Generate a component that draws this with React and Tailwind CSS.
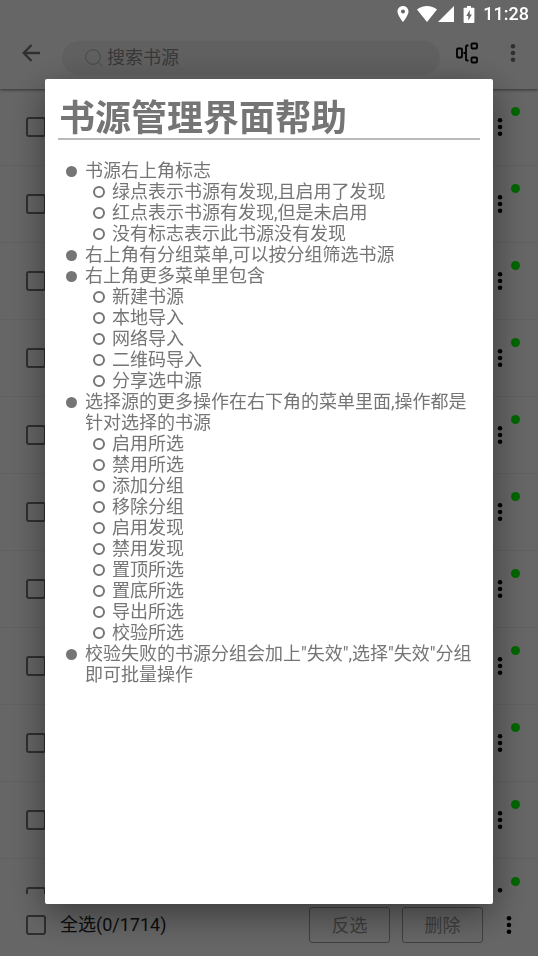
import React, { useState } from "react";

const FONT = "font-[Roboto,'Noto_Sans_CJK_SC',sans-serif]";

const SOURCE_COUNT = 11;

const helpItems = [
  {
    text: "书源右上角标志",
    children: [
      "绿点表示书源有发现,且启用了发现",
      "红点表示书源有发现,但是未启用",
      "没有标志表示此书源没有发现",
    ],
  },
  { text: "右上角有分组菜单,可以按分组筛选书源" },
  {
    text: "右上角更多菜单里包含",
    children: ["新建书源", "本地导入", "网络导入", "二维码导入", "分享选中源"],
  },
  {
    text: "选择源的更多操作在右下角的菜单里面,操作都是针对选择的书源",
    children: [
      "启用所选",
      "禁用所选",
      "添加分组",
      "移除分组",
      "启用发现",
      "禁用发现",
      "置顶所选",
      "置底所选",
      "导出所选",
      "校验所选",
    ],
  },
  { text: '校验失败的书源分组会加上"失效",选择"失效"分组即可批量操作' },
];

const MoreIcon = () => (
  <svg className="w-[6px] h-[20px]" viewBox="0 0 6 20" fill="currentColor">
    <circle cx="3" cy="3.3" r="2.3" />
    <circle cx="3" cy="10" r="2.3" />
    <circle cx="3" cy="16.7" r="2.3" />
  </svg>
);

const CheckBox = ({ label, ...props }) => (
  <input
    type="checkbox"
    aria-label={label}
    className="appearance-none shrink-0 w-[20px] h-[20px] border-2 border-[#757575] rounded-[3px] checked:bg-[#757575]"
    {...props}
  />
);

const StatusBar = () => (
  <div className="fixed top-0 inset-x-0 z-30 h-[28px] pr-[9px] flex items-center justify-end text-white">
    <svg className="w-[12px] h-[16px] mr-[8px]" viewBox="0 0 12 16" fill="currentColor">
      <path
        fillRule="evenodd"
        d="M6 0C2.9 0 .5 2.4.5 5.5.5 9.6 6 16 6 16s5.500-6.400 5.500-10.500C11.500 2.400 9.100 0 6 0Zm0 3.500a2 2 0 1 1 0 4 2 2 0 0 1 0-4Z"
      />
    </svg>
    <svg className="w-[20px] h-[16px] mr-[1px]" viewBox="0 0 20 16" fill="currentColor">
      <path d="M10 16 0 3.500C2.800 1.300 6.200 0 10 0s7.200 1.300 10 3.500L10 16Z" />
    </svg>
    <svg className="w-[16px] h-[16px] mr-[9px]" viewBox="0 0 16 16" fill="currentColor">
      <path d="M16 0v16H0Z" />
    </svg>
    <svg className="w-[12px] h-[17px] mr-[8px]" viewBox="0 0 12 17" fill="currentColor">
      <path
        fillRule="evenodd"
        d="M4 0h4v1.700h2.500c.5 0 .9.4.9.9v13.500c0 .5-.4.9-.9.9h-9c-.5 0-.9-.4-.9-.9V2.600c0-.5.4-.9.9-.9H4V0Zm2.800 4L3.300 10h2v4.500L8.900 8.400H6.800V4Z"
      />
    </svg>
    <span className="text-[18px] leading-[28px] font-medium">11:28</span>
  </div>
);

const Toolbar = () => (
  <header className="relative z-10 pt-[28px] pb-[11px] bg-white shadow-[0_1px_3px_rgba(0,0,0,0.5)]">
    <div className="h-[50px] flex items-center pl-[22px] pr-[22px]">
      <button aria-label="返回" className="text-[#757575]">
        <svg className="w-[18px] h-[18px]" viewBox="0 0 18 18" fill="none" stroke="currentColor" strokeWidth="2.300">
          <path d="M9.500 1 1.700 9l7.800 8M1.500 9H18" />
        </svg>
      </button>
      <label className="flex-1 h-[34px] mt-[10px] ml-[22px] pl-[23px] flex items-center rounded-full bg-[#f0f0f0] text-[#8c8c8c]">
        <svg className="w-[18px] h-[18px] mr-[4px] text-[#b0b0b0]" viewBox="0 0 18 18" fill="none" stroke="currentColor">
          <circle cx="8" cy="8" r="7.300" />
          <path d="m13.200 13.200 4 4" />
        </svg>
        <input
          type="text"
          placeholder="搜索书源"
          className="flex-1 min-w-0 bg-transparent text-[18px] leading-[24px] outline-none placeholder:text-[#8c8c8c]"
        />
      </label>
      <button aria-label="分组" className="ml-[16px] text-black">
        <svg className="w-[22px] h-[22px]" viewBox="0 0 22 22" fill="none" stroke="currentColor" strokeWidth="1.800">
          <rect x="1" y="6.500" width="5" height="9" rx="1" />
          <path d="M7.500 11H10M12.500 3.500h-1.500c-.6 0-1 .4-1 1v13c0 .6.4 1 1 1h1.500" />
          <rect x="15.500" y="1.500" width="5.500" height="5" rx="1" />
          <rect x="15.500" y="15.500" width="5.500" height="5" rx="1" />
        </svg>
      </button>
      <button aria-label="更多" className="ml-[32px] text-[#757575]">
        <MoreIcon />
      </button>
    </div>
  </header>
);

const SourceRow = ({ index }) => (
  <li className="relative h-[77px] shrink-0 flex items-center justify-between pl-[26px] pr-[35px] border-b border-[#f0f0f0]">
    <CheckBox label={`书源 ${index + 1}`} />
    <button aria-label="更多" className="text-black">
      <MoreIcon />
    </button>
    <span className="absolute top-[18px] right-[18px] w-[9px] h-[9px] rounded-full bg-[#00ff00]" />
  </li>
);

const BottomBar = ({ checked, onChange }) => (
  <footer className="h-[62px] shrink-0 flex items-center pl-[26px] pr-[26px] bg-white">
    <label className="flex items-center gap-[14px] text-[18px] leading-[24px] text-[#222222]">
      <CheckBox checked={checked} onChange={onChange} />
      全选(0/1714)
    </label>
    <div className="ml-auto flex items-center gap-[12px]">
      <button className="w-[81px] h-[36px] border border-[#a0a0a0] rounded-[3px] text-[18px] text-[#999999]">
        反选
      </button>
      <button className="w-[81px] h-[36px] border border-[#a0a0a0] rounded-[3px] text-[18px] text-[#999999]">
        删除
      </button>
    </div>
    <button aria-label="更多操作" className="ml-[23px] text-black">
      <MoreIcon />
    </button>
  </footer>
);

const HelpDialog = () => (
  <div className="fixed inset-0 z-20 flex bg-black/60 pt-[79px] pb-[52px] px-[45px]">
    <div
      role="dialog"
      aria-labelledby="help-title"
      className="flex-1 overflow-y-auto px-[13px] pt-[12px] bg-white rounded-[2px] text-[#757575] shadow-[0_10px_36px_rgba(0,0,0,0.45)]"
    >
      <h1
        id="help-title"
        className="pl-px h-[49px] text-[36px] leading-[56px] font-bold border-b-2 border-[#bababa]"
      >
        书源管理界面帮助
      </h1>
      <ul className="mt-[20px] pl-[8px] pr-[4px] text-[18px] leading-[21px]">
        {helpItems.map((item) => (
          <li key={item.text}>
            <div className="flex gap-[8px]">
              <span className="shrink-0 mt-[6px] w-[11px] h-[11px] rounded-full bg-[#757575]" />
              <span>{item.text}</span>
            </div>
            {item.children && (
              <ul className="pl-[27px]">
                {item.children.map((child) => (
                  <li key={child} className="flex gap-[7px]">
                    <span className="shrink-0 mt-[5px] w-[12px] h-[12px] rounded-full border-2 border-[#757575]" />
                    <span>{child}</span>
                  </li>
                ))}
              </ul>
            )}
          </li>
        ))}
      </ul>
    </div>
  </div>
);

const App = () => {
  const [allChecked, setAllChecked] = useState(false);

  return (
    <div className={`h-screen flex flex-col overflow-hidden bg-white ${FONT}`}>
      <StatusBar />
      <Toolbar />
      <ul className="flex-1 min-h-0 overflow-hidden flex flex-col">
        {Array.from({ length: SOURCE_COUNT }, (_, i) => (
          <SourceRow key={i} index={i} />
        ))}
      </ul>
      <BottomBar
        checked={allChecked}
        onChange={(e) => setAllChecked(e.target.checked)}
      />
      <HelpDialog />
    </div>
  );
};

export default App;
